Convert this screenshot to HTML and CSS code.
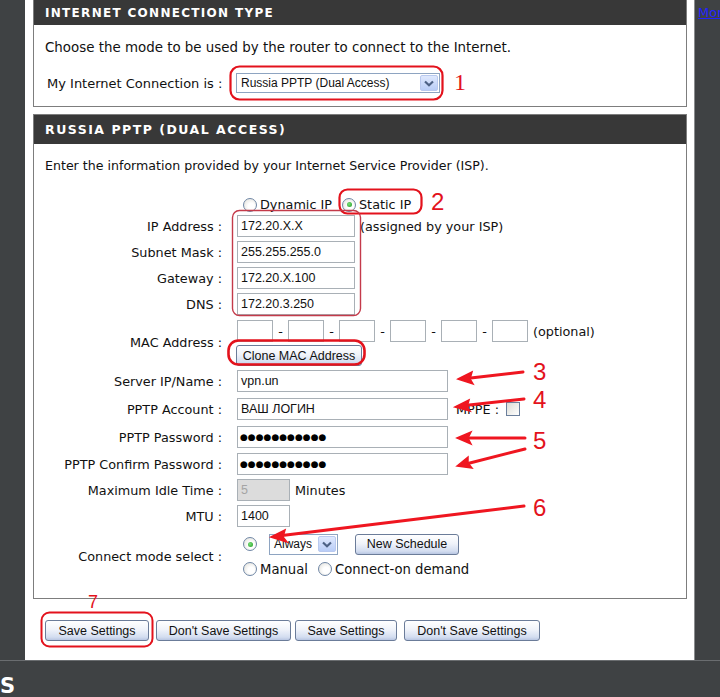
FILE: index.html
```html
<!DOCTYPE html>
<html>
<head>
<meta charset="utf-8">
<title>PPTP settings</title>
<link rel="stylesheet" href="styles.css">
</head>
<body>
<div class="page">
  <div class="leftbar"></div>
  <div class="main">
    <section class="box box1">
      <h2 class="box-head head1">INTERNET CONNECTION TYPE</h2>
      <div class="box-body body1">
        <p class="intro">Choose the mode to be used by the router to connect to the Internet.</p>
        <div class="conn-row">
          <span class="conn-label">My Internet Connection is :</span>
          <span class="select select-wide"><span class="select-text">Russia PPTP (Dual Access)</span><span class="select-btn"><svg width="10" height="7" viewBox="0 0 10 7"><path d="M1 1.5 L5 5.2 L9 1.5" fill="none" stroke="#4d6185" stroke-width="2.2"/></svg></span></span>
        </div>
      </div>
    </section>

    <section class="box box2">
      <h2 class="box-head head2">RUSSIA PPTP (DUAL ACCESS)</h2>
      <div class="box-body body2">
        <p class="intro2">Enter the information provided by your Internet Service Provider (ISP).</p>

        <div class="row row-radio">
          <span class="label"></span>
          <div class="field">
            <span class="radio"></span><span class="rtext">Dynamic IP</span>
            <span class="radio checked gap-static"></span><span class="rtext">Static IP</span>
          </div>
        </div>

        <div class="row">
          <span class="label">IP Address :</span>
          <div class="field"><span class="input w-ip">172.20.X.X</span><span class="after">(assigned by your ISP)</span></div>
        </div>
        <div class="row">
          <span class="label">Subnet Mask :</span>
          <div class="field"><span class="input w-ip">255.255.255.0</span></div>
        </div>
        <div class="row">
          <span class="label">Gateway :</span>
          <div class="field"><span class="input w-ip">172.20.X.100</span></div>
        </div>
        <div class="row">
          <span class="label">DNS :</span>
          <div class="field"><span class="input w-ip">172.20.3.250</span></div>
        </div>

        <div class="row row-mac">
          <span class="label">MAC Address :</span>
          <div class="field-col">
            <div class="mac-line">
              <span class="input w-mac"></span><span class="dash">-</span>
              <span class="input w-mac"></span><span class="dash">-</span>
              <span class="input w-mac"></span><span class="dash">-</span>
              <span class="input w-mac"></span><span class="dash">-</span>
              <span class="input w-mac"></span><span class="dash">-</span>
              <span class="input w-mac"></span>
              <span class="after">(optional)</span>
            </div>
            <span class="btn btn-clone">Clone MAC Address</span>
          </div>
        </div>

        <div class="row row-server">
          <span class="label">Server IP/Name :</span>
          <div class="field"><span class="input w-long">vpn.un</span></div>
        </div>
        <div class="row row-28">
          <span class="label">PPTP Account :</span>
          <div class="field"><span class="input w-long">ВАШ ЛОГИН</span><span class="mppe">MPPE :</span><span class="checkbox"></span></div>
        </div>
        <div class="row row-28">
          <span class="label">PPTP Password :</span>
          <div class="field"><span class="input w-long dots">●●●●●●●●●●●</span></div>
        </div>
        <div class="row">
          <span class="label">PPTP Confirm Password :</span>
          <div class="field"><span class="input w-long dots">●●●●●●●●●●●</span></div>
        </div>
        <div class="row">
          <span class="label">Maximum Idle Time :</span>
          <div class="field"><span class="input w-short disabled">5</span><span class="after">Minutes</span></div>
        </div>
        <div class="row">
          <span class="label">MTU :</span>
          <div class="field"><span class="input w-short">1400</span></div>
        </div>

        <div class="row row-connect">
          <span class="label">Connect mode select :</span>
          <div class="field-col">
            <div class="conn-line1">
              <span class="radio checked"></span>
              <span class="select select-small"><span class="select-text">Always</span><span class="select-btn"><svg width="10" height="7" viewBox="0 0 10 7"><path d="M1 1.5 L5 5.2 L9 1.5" fill="none" stroke="#4d6185" stroke-width="2.2"/></svg></span></span>
              <span class="btn btn-sched">New Schedule</span>
            </div>
            <div class="conn-line2">
              <span class="radio"></span><span class="rtext">Manual</span>
              <span class="radio gap-demand"></span><span class="rtext">Connect-on demand</span>
            </div>
          </div>
        </div>
      </div>
    </section>

    <div class="actions">
      <span class="btn b1">Save Settings</span>
      <span class="btn b2">Don't Save Settings</span>
      <span class="btn b3">Save Settings</span>
      <span class="btn b4">Don't Save Settings</span>
    </div>
  </div>
  <div class="rightbar"><span class="more">More...</span></div>
</div>
<div class="footer"><span class="logo">S</span></div>

<svg class="notes" width="720" height="697" viewBox="0 0 720 697">
  <g fill="none" stroke="#e3121c">
    <rect x="230.5" y="66.5" width="212" height="33" rx="9" stroke-width="2.2"/>
    <rect x="339.5" y="189.5" width="82" height="24" rx="8" stroke-width="2.2"/>
    <rect x="232.5" y="210.5" width="128" height="105" rx="7" stroke="#c43a4a" stroke-width="1.4"/>
    <rect x="228.5" y="340.5" width="136" height="24" rx="10" stroke-width="2.6"/>
    <rect x="41.5" y="612.5" width="111" height="34" rx="8" stroke-width="2"/>
  </g>
  <g stroke="#ef1620" stroke-width="3" stroke-linecap="round" fill="#ef1620">
    <line x1="523" y1="372" x2="462" y2="379"/>
    <path d="M458 379 L472 372 L470 379 L473 384 Z" stroke-width="1.5"/>
    <line x1="524" y1="399" x2="460" y2="406"/>
    <path d="M455 407 L469 400 L467 407 L470 411 Z" stroke-width="1.5"/>
    <line x1="525" y1="438" x2="462" y2="438"/>
    <path d="M457 438 L471 432 L468 438 L471 444 Z" stroke-width="1.5"/>
    <line x1="525" y1="449" x2="462" y2="465"/>
    <path d="M457 466 L468 457 L468 463 L472 468 Z" stroke-width="1.5"/>
    <line x1="524" y1="506" x2="278" y2="536"/>
    <path d="M271 537 L285 530 L283 537 L287 542 Z" stroke-width="1.5"/>
  </g>
  <g fill="#e3121c">
    <text class="n-serif" x="454" y="90">1</text>
    <text class="n-sans" x="431" y="210">2</text>
    <text class="n-sans" x="533" y="380">3</text>
    <text class="n-sans" x="533" y="408">4</text>
    <text class="n-sans" x="533" y="449">5</text>
    <text class="n-sans" x="533" y="516">6</text>
    <text class="n-seven" x="88" y="608">7</text>
  </g>
</svg>
</body>
</html>
```

FILE: styles.css
```css
* { box-sizing: border-box; }
html, body { margin: 0; padding: 0; }
body {
  width: 720px;
  height: 697px;
  overflow: hidden;
  position: relative;
  background: #3f4244;
  font-family: "DejaVu Sans", sans-serif;
  font-size: 12.8px;
  color: #111;
}
p { margin: 0; }
h2 { margin: 0; }

.page { display: flex; height: 660px; }
.leftbar { width: 25px; background: #3f4244; }
.main {
  width: 669px;
  background: #fff;
  padding: 0 7px 0 8px;
  display: flex;
  flex-direction: column;
}
.rightbar {
  width: 26px;
  background: #3f4244;
  border-left: 1px solid #8a8c8e;
  padding: 5px 0 0 3px;
  overflow: hidden;
  white-space: nowrap;
}
.more { color: #2222ff; text-decoration: underline; font-size: 13px; }

.footer { height: 37px; background: #3f4244; border-top: 1px solid #6a6d70; }
.logo {
  display: block;
  color: #fff;
  font-weight: bold;
  font-size: 21px;
  line-height: 20px;
  padding-top: 15px;
}

.box { border: 1px solid #7d7d7d; background: #fff; }
.box1 { border-top: none; }
.box2 { margin-top: 7px; }
.box-head {
  background: #383838;
  color: #fff;
  font-weight: bold;
  padding-left: 11px;
  display: flex;
  align-items: center;
}
.head1 { height: 25px; font-size: 12px; letter-spacing: 1.3px; }
.head2 { height: 29px; font-size: 12.5px; letter-spacing: 1.5px; }

.body1 { height: 81px; padding: 15px 0 0 0; }
.intro { line-height: 16px; padding-left: 11px; font-size: 13.4px; }
.conn-row {
  margin-top: 15px;
  height: 24px;
  display: flex;
  align-items: center;
  padding-left: 13px;
  font-size: 13px;
}
.conn-label { width: 189px; }

.select {
  display: inline-flex;
  align-items: center;
  justify-content: space-between;
  height: 20px;
  border: 1px solid #8ea4c1;
  background: #fff;
  padding: 0 1px 0 4px;
  font-family: "Liberation Sans", sans-serif;
  font-size: 12px;
}
.select-wide { width: 204px; }
.select-small { width: 69px; height: 21px; }
.select-text { white-space: nowrap; }
.select-btn {
  width: 18px;
  height: 16px;
  border: 1px solid #b9c9ef;
  border-radius: 2px;
  background: linear-gradient(#dfe8fd, #b9cdf7);
  display: flex;
  align-items: center;
  justify-content: center;
}

.body2 { padding: 14px 0 17px 0; }
.intro2 { line-height: 16px; padding-left: 11px; margin-bottom: 20px; font-size: 12.6px; }

.row {
  display: grid;
  grid-template-columns: 188px 1fr;
  column-gap: 15px;
  align-items: center;
  height: 26px;
}
.row-radio { height: 19px; }
.row-mac { height: 50px; }
.row-server { height: 28px; }
.row-28 { height: 28px; }
.row-connect { height: 50px; margin-top: 2px; }
.label { text-align: right; white-space: nowrap; }
.field { display: flex; align-items: center; }
.field-col { display: flex; flex-direction: column; align-items: flex-start; }

.input {
  display: inline-flex;
  align-items: center;
  height: 22px;
  border: 1px solid #a9b0b6;
  background: #fff;
  padding-left: 3px;
  white-space: nowrap;
  overflow: hidden;
  font-family: "Liberation Sans", sans-serif;
  font-size: 12.5px;
}
.w-ip { width: 118px; }
.w-long { width: 211px; }
.w-short { width: 53px; }
.w-mac { width: 36px; }
.disabled { background: #dcdcdc; color: #a4a4a4; }
.dots { font-family: "DejaVu Sans", sans-serif; font-size: 9px; padding-left: 2px; color: #000; }
.after { margin-left: 5px; white-space: nowrap; }

.mac-line { display: flex; align-items: center; height: 22px; margin-top: 2px; }
.dash { width: 15px; text-align: center; }
.btn-clone { margin-top: 3px; margin-left: -1px; width: 126px; height: 20px; }

.mppe { margin-left: 8px; }
.checkbox {
  width: 14px;
  height: 14px;
  margin-left: 7px;
  border: 1px solid #6b7f9c;
  background: linear-gradient(135deg, #dcdcd6, #fff);
}

.radio {
  width: 14px;
  height: 14px;
  border-radius: 50%;
  border: 1px solid #6f86a5;
  background: radial-gradient(circle at 60% 60%, #fff 30%, #dddcd5);
  display: inline-block;
  position: relative;
  margin-left: 6px;
  margin-right: 3px;
  flex: none;
}
.radio.checked::after {
  content: "";
  position: absolute;
  left: 3.5px;
  top: 3.5px;
  width: 5px;
  height: 5px;
  border-radius: 50%;
  background: radial-gradient(circle at 40% 40%, #7be07b, #1f9a1f);
}
.gap-static { margin-left: 10px; }
.gap-demand { margin-left: 10px; }
.rtext { white-space: nowrap; }
.row-radio .field { padding-top: 2px; }
.conn-line2 .rtext { font-size: 13.2px; }

.conn-line1 { display: flex; align-items: center; height: 26px; }
.conn-line1 .select-small { margin-left: 9px; }
.conn-line2 { display: flex; align-items: center; height: 24px; }

.btn {
  display: inline-flex;
  align-items: center;
  justify-content: center;
  height: 21px;
  border: 1px solid #6b7c99;
  border-radius: 3px;
  background: linear-gradient(#ffffff, #f0f3fa 45%, #d3ddf0 85%, #b8c6e2);
  white-space: nowrap;
  font-family: "Liberation Sans", sans-serif;
  font-size: 12.5px;
}
.btn-sched { margin-left: 17px; width: 104px; }

.actions { display: flex; margin-top: 21px; padding-left: 12px; }
.b1 { width: 104px; }
.b2 { width: 135px; margin-left: 7px; }
.b3 { width: 102px; margin-left: 4px; }
.b4 { width: 136px; margin-left: 7px; }

.notes { position: absolute; left: 0; top: 0; pointer-events: none; }
.n-serif { font-family: "Liberation Serif", serif; font-size: 24px; }
.n-sans { font-family: "Liberation Sans", sans-serif; font-size: 24px; }
.n-seven { font-family: "Liberation Sans", sans-serif; font-size: 18px; }
```
